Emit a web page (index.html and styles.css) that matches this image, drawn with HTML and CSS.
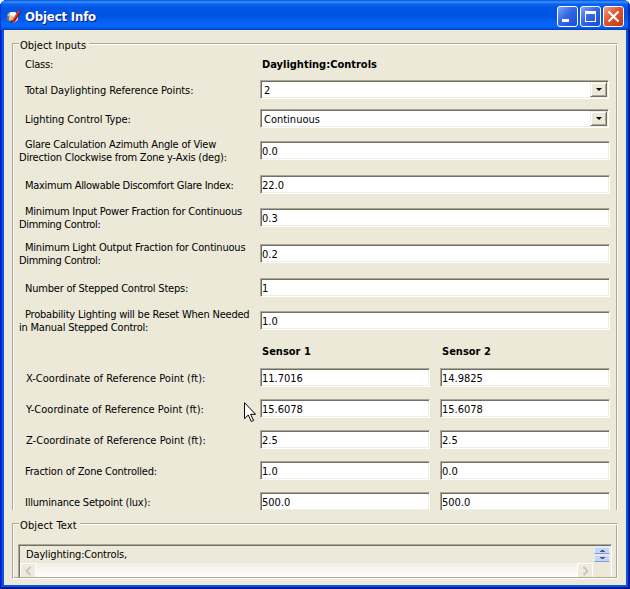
FILE: index.html
```
<!DOCTYPE html>
<html lang="en">
<head>
<meta charset="utf-8">
<title>Object Info</title>
<link rel="stylesheet" href="styles.css">
</head>
<body>
<div class="window">
  <header class="titlebar">
    <svg class="app-icon" viewBox="0 0 16 16">
      <path d="M1 6l3-3h5l3 3v5l-4 3-4-2-3-2z" fill="#d9c3a0"/>
      <path d="M5 3h4l2 2-3 3-4-2z" fill="#fff"/>
      <path d="M1 6l2 1v5l-2-2z" fill="#8a6a4c"/>
      <path d="M4 12l2-1 2 2-3 1z" fill="#333"/>
      <path d="M14 1.500L7 13" stroke="#7a0c0c" stroke-width="2.600"/>
      <path d="M13.500 1.500L6.500 12.500" stroke="#ee3a2a" stroke-width="1.400"/>
    </svg>
    <h1 class="title">Object Info</h1>
    <div class="buttons">
      <button class="btn"><svg viewBox="0 0 21 21"><path d="M5 13h7v3H5z" fill="#fff"/></svg></button>
      <button class="btn"><svg viewBox="0 0 21 21"><path d="M5 5h11v11H5zM6 8v7h9V8z" fill="#fff" fill-rule="evenodd"/></svg></button>
      <button class="btn close"><svg viewBox="0 0 21 21"><path d="M5.500 5.500l10 10M15.500 5.500l-10 10" stroke="#fff" stroke-width="2.200"/></svg></button>
    </div>
  </header>
  <main class="client">
    <section class="group inputs">
      <h2 class="legend">Object Inputs</h2>
      <div class="row r-class"><div class="label">Class:</div><b class="head">Daylighting:Controls</b></div>
      <div class="row r-combo1"><div class="label">Total Daylighting Reference Points:</div><div class="field combo">2<i class="drop"></i></div></div>
      <div class="row r-combo2"><div class="label">Lighting Control Type:</div><div class="field combo">Continuous<i class="drop"></i></div></div>
      <div class="row r-glare"><div class="label">Glare Calculation Azimuth Angle of View<br>Direction Clockwise from Zone y-Axis (deg):</div><div class="field">0.0</div></div>
      <div class="row r-max"><div class="label">Maximum Allowable Discomfort Glare Index:</div><div class="field">22.0</div></div>
      <div class="row r-power"><div class="label">Minimum Input Power Fraction for Continuous<br><span class="tight">Dimming Control:</span></div><div class="field">0.3</div></div>
      <div class="row r-light"><div class="label">Minimum Light Output Fraction for Continuous<br><span class="tight">Dimming Control:</span></div><div class="field">0.2</div></div>
      <div class="row r-steps"><div class="label">Number of Stepped Control Steps:</div><div class="field">1</div></div>
      <div class="row r-prob"><div class="label">Probability Lighting will be Reset When Needed<br>in Manual Stepped Control:</div><div class="field">1.0</div></div>
      <div class="row r-sensors"><div class="label"></div><b class="head">Sensor 1</b><b class="head">Sensor 2</b></div>
      <div class="row r-sensor coord"><div class="label">X-Coordinate of Reference Point (ft):</div><div class="field">11.7016</div><div class="field">14.9825</div></div>
      <div class="row r-sensor coord"><div class="label">Y-Coordinate of Reference Point (ft):</div><div class="field">15.6078</div><div class="field">15.6078</div></div>
      <div class="row r-sensor coord"><div class="label">Z-Coordinate of Reference Point (ft):</div><div class="field">2.5</div><div class="field">2.5</div></div>
      <div class="row r-sensor"><div class="label">Fraction of Zone Controlled:</div><div class="field">1.0</div><div class="field">0.0</div></div>
      <div class="row r-sensor"><div class="label">Illuminance Setpoint (lux):</div><div class="field">500.0</div><div class="field">500.0</div></div>
    </section>
    <section class="group text">
      <h2 class="legend">Object Text</h2>
      <div class="textbox">
        <div class="textmain">
          <div class="code">Daylighting:Controls,</div>
          <div class="hscroll">
            <span class="arrow"><svg viewBox="0 0 15 14"><path d="M9.500 3l-4 4 4 4" fill="none" stroke="#c9c7ba" stroke-width="2"/></svg></span>
            <span class="arrow"><svg viewBox="0 0 15 14"><path d="M5.500 3l4 4-4 4" fill="none" stroke="#c9c7ba" stroke-width="2"/></svg></span>
          </div>
        </div>
        <div class="vscroll">
          <span class="spin"><svg viewBox="0 0 5 3"><path d="M0 3V2h1V1h3v1h1v1z" fill="#4d6185"/></svg></span>
          <span class="spin"><svg viewBox="0 0 5 3"><path d="M0 0v1h1v1h3V1h1V0z" fill="#4d6185"/></svg></span>
        </div>
      </div>
    </section>
  </main>
  <svg class="cursor" viewBox="0 0 12 21"><path d="M.5.700v16l3.800-3.700 3 6.500 2.300-1-3-6.200h5z" fill="#fff" stroke="#000"/></svg>
</div>
</body>
</html>
```
FILE: styles.css
```
* { box-sizing: border-box; }
body {
  margin: 0;
  background: #fff;
  font: 11px/13px "DejaVu Sans Condensed", "DejaVu Sans", sans-serif;
  font-stretch: condensed;
  color: #000;
}
.window {
  position: relative;
  width: 630px;
  height: 589px;
  overflow: hidden;
  border-radius: 7px 7px 0 0;
  background: #0855dd;
  box-shadow: inset 1px 0 #0019cf, inset -1px -1px #00138c, inset 2px 0 #0831d9, inset -2px -2px #001ea0;
  display: flex;
  flex-direction: column;
}
.titlebar {
  height: 30px;
  flex: none;
  display: flex;
  align-items: center;
  padding: 3px 6px 0;
  background: linear-gradient(#0450d8 0, #3a92fd 2px, #0a62f0 4px, #0255e5 8px, #0054e3 16px, #0566fc 24px, #0463f5 27px, #0040c0 30px);
  box-shadow: inset 1px 0 #0831d9, inset -2px 0 #0030b8;
}
.app-icon { width: 16px; height: 16px; }
.title {
  margin: 0 auto 0 3px;
  color: #fff;
  font: bold 13px/16px "DejaVu Sans Condensed", "DejaVu Sans", sans-serif;
  font-stretch: condensed;
  letter-spacing: -0.15px;
  text-shadow: 1px 1px #0a1883;
}
.buttons { display: flex; gap: 2px; }
.btn {
  width: 21px;
  height: 21px;
  padding: 0;
  border: 1px solid #fff;
  border-radius: 3px;
  background: linear-gradient(135deg, #7fa3f2, #3467e6 45%, #1c4bd0);
}
.btn svg { display: block; width: 21px; height: 21px; margin: -1px; }
.close { background: linear-gradient(135deg, #f0a088, #e0532e 45%, #c33b12); }
.client {
  flex: none;
  width: 622px;
  height: 555px;
  margin-left: 4px;
  padding: 13px 8px 0;
  background: #ece9d8;
}
.group {
  width: 606px;
  border: 1px solid;
  border-color: #aca899 #fff #fff #aca899;
  box-shadow: inset 1px 1px #fff, inset -1px -1px #aca899;
  padding: 0 7px 0 6px;
}
.inputs {
  height: 467px;
  border-bottom: 0;
  box-shadow: inset 1px 1px #fff, inset -1px 0 #aca899;
  clip-path: inset(-10px 0 0 0);
}
.text { height: 56px; margin-top: 13px; }
.legend {
  width: max-content;
  height: 13px;
  margin: -5px 0 0;
  padding: 0 3px 0 1px;
  font: inherit;
  background: #ece9d8;
}
.text .legend { letter-spacing: 0.15px; }
.row {
  display: grid;
  grid-template-columns: 241px 350px;
  align-items: center;
  height: 27px;
}
.label { text-indent: 6px; white-space: nowrap; padding-top: 1px; letter-spacing: -0.21px; }
.tight { letter-spacing: -0.36px; }
.head { padding-left: 2px; font-size: 11px; }
.r-class { height: 24px; }
.r-class .label { padding: 0; }
.r-combo1 .label { letter-spacing: -0.1px; }
.r-combo2 { margin-top: 2px; }
.r-combo2 .label { letter-spacing: -0.1px; }
.r-glare { margin-top: 5px; }
.r-max { margin-top: 7px; }
.r-max .label { letter-spacing: -0.28px; }
.r-power { margin-top: 6px; }
.r-light { margin-top: 9px; }
.r-steps { margin-top: 7px; }
.r-prob { margin-top: 6px; }
.r-sensors, .r-sensor { grid-template-columns: 241px 170px 170px; }
.r-sensors .head:last-child, .r-sensor .field:last-child { margin-left: 10px; margin-right: -10px; }
.r-sensors { height: 30px; padding-top: 4px; }
.r-sensor { margin-bottom: 4px; }
.coord .label { text-indent: 7px; letter-spacing: 0.02px; }
.field {
  height: 19px;
  border: 1px solid;
  border-color: #aca899 #fff #fff #aca899;
  background: #fff;
  box-shadow: inset 1px 1px #716f64, inset -1px -1px #f1efe2;
  padding: 3px 0 0 1px;
  line-height: 13px;
}
.combo { width: 349px; display: flex; justify-content: space-between; padding: 1px 1px 1px 3px; line-height: 17px; }
.drop {
  width: 17px;
  height: 15px;
  background: #ece9d8;
  border: 1px solid;
  border-color: #f1efe2 #716f64 #716f64 #f1efe2;
  box-shadow: inset 1px 1px #fff, inset -1px -1px #aca899;
  display: grid;
  place-items: center;
}
.drop::after { content: ""; border: 3px solid transparent; border-top-color: #000; border-bottom: 0; }
.textbox {
  width: 594px;
  height: 33px;
  margin: 12px 0 0 -1px;
  border: 1px solid #aca899;
  border-right-color: #fff;
  border-bottom: 0;
  box-shadow: inset 1px 1px #716f64, inset -1px 0 #f1efe2;
  padding: 1px 1px 0;
  display: flex;
}
.textmain { width: 573px; }
.code { height: 17px; padding: 2px 0 0 6px; letter-spacing: -0.15px; }
.hscroll { height: 14px; display: flex; justify-content: space-between; background: linear-gradient(#f0efe8, #fefefb); }
.arrow { width: 16px; background: #eeebdd; border: 1px solid #fff; border-bottom: 0; }
.arrow svg { display: block; width: 15px; height: 14px; }
.vscroll { width: 16px; margin-left: 1px; }
.spin { height: 7px; margin-top: 1px; display: grid; place-items: center; background: #c3d3fd; border: 1px solid #e4ecff; border-bottom-color: #7f9fd0; }
.spin svg { width: 5px; height: 3px; }
.cursor { position: absolute; left: 244px; top: 402px; width: 12px; height: 21px; }
```
